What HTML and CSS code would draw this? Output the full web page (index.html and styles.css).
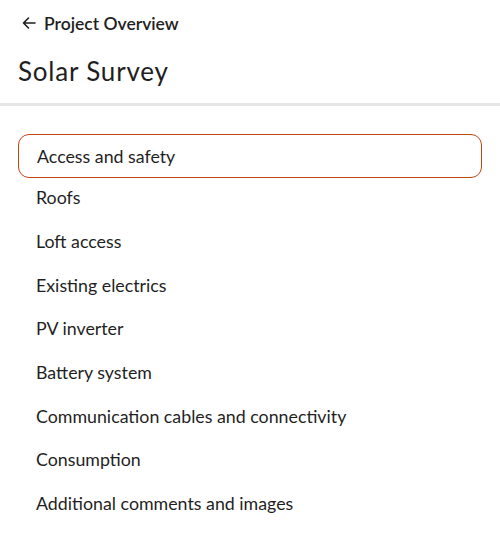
FILE: index.html
```html
<!DOCTYPE html>
<html>
<head>
<meta charset="utf-8">
<link rel="stylesheet" href="styles.css">
</head>
<body>
<header class="top">
  <a class="back">
    <svg class="back-icon" width="16" height="16" viewBox="0 0 16 16"><path d="M14 8H2.5M7.5 3L2.5 8l5 5" fill="none" stroke="#1f1f1f" stroke-width="1.6" stroke-linecap="round" stroke-linejoin="round"/></svg>
    <span>Project Overview</span>
  </a>
  <h1 class="title">Solar Survey</h1>
</header>
<nav class="sections">
  <div class="item active">Access and safety</div>
  <div class="item">Roofs</div>
  <div class="item">Loft access</div>
  <div class="item">Existing electrics</div>
  <div class="item">PV inverter</div>
  <div class="item">Battery system</div>
  <div class="item">Communication cables and connectivity</div>
  <div class="item">Consumption</div>
  <div class="item">Additional comments and images</div>
</nav>
</body>
</html>
```
FILE: styles.css
```css
* { box-sizing: border-box; }
body {
  margin: 0;
  background: #fff;
  font-family: "Lato", "Open Sans", sans-serif;
  color: #1f1f1f;
}
.top {
  border-bottom: 3px solid #e6e6e6;
  padding: 12px 18px 17px;
}
.back {
  display: flex;
  align-items: center;
  gap: 7px;
  padding-left: 3px;
  font-size: 17.5px;
  font-weight: 600;
  height: 22px;
}
.title {
  margin: 22px 0 0;
  font-size: 26px;
  letter-spacing: 0.8px;
  font-weight: 400;
  line-height: 30px;
}
.sections {
  padding: 28px 18px 0;
  display: flex;
  flex-direction: column;
}
.item {
  height: 43.7px;
  display: flex;
  align-items: center;
  padding-left: 17px;
  font-size: 17.8px;
  border: 1px solid transparent;
  border-radius: 11px;
}
.item.active {
  height: 44px;
  margin-bottom: -2.5px;
  padding-left: 18px;
  border-color: #c2470f;
}
```
